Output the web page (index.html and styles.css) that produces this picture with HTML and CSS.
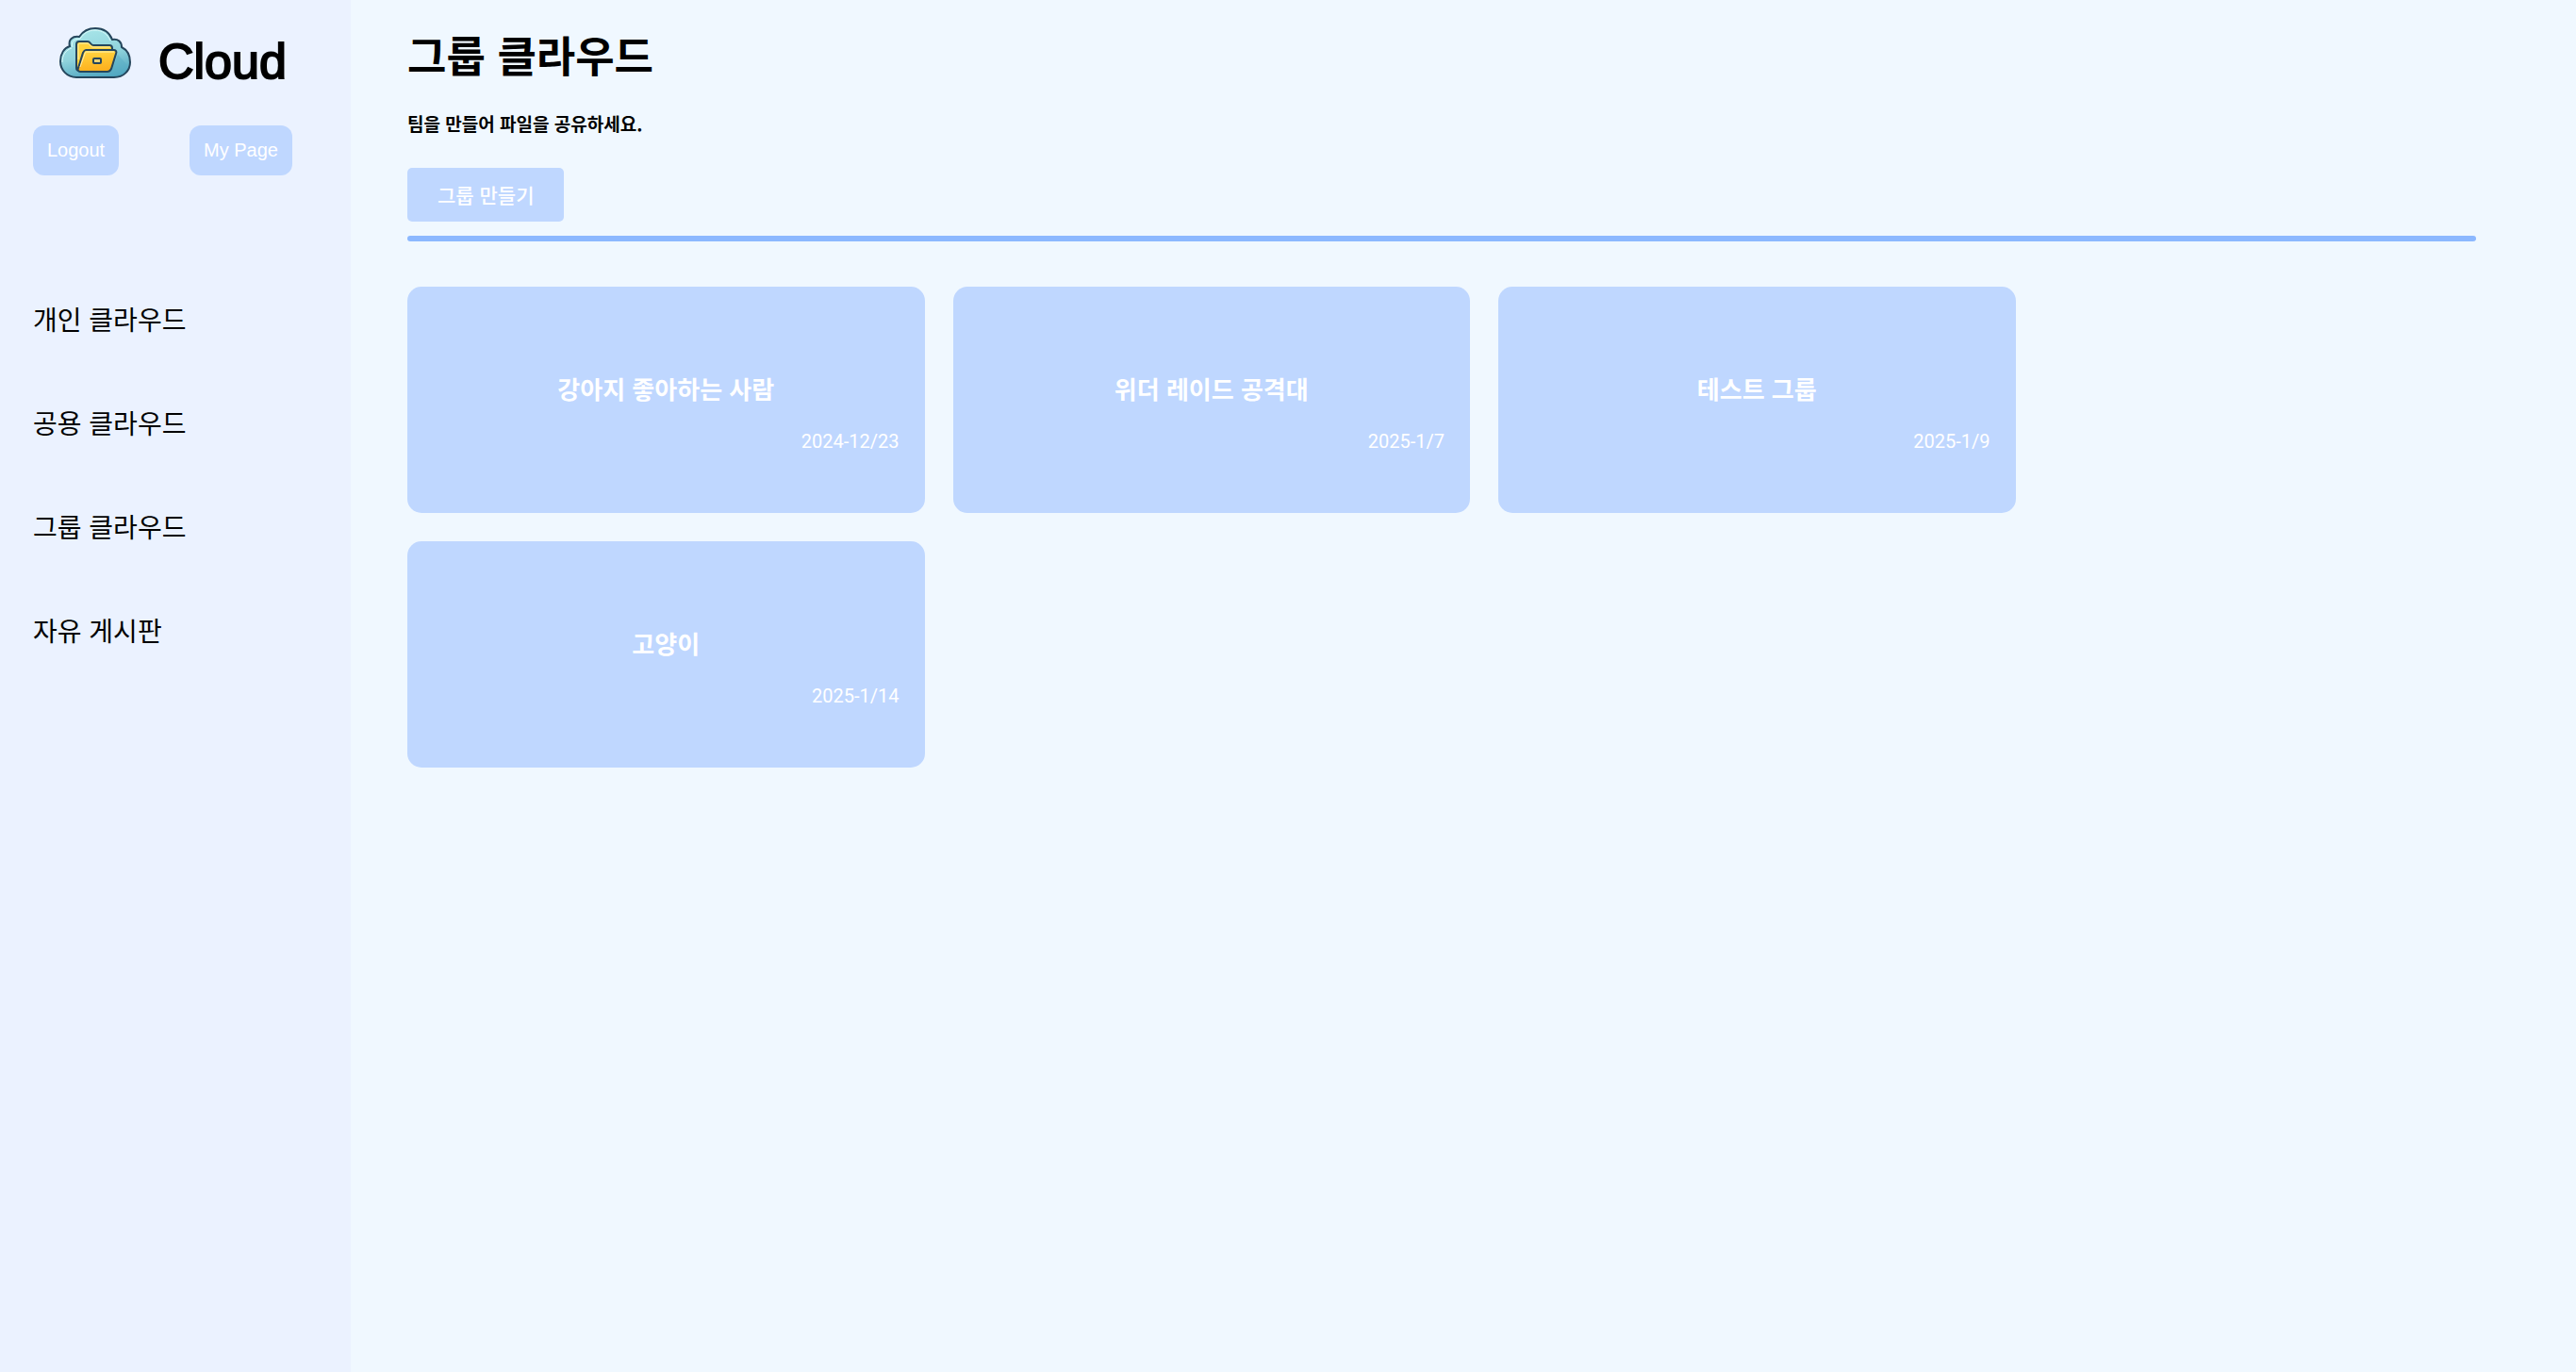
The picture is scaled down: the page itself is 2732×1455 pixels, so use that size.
FILE: index.html
```html
<!DOCTYPE html>
<html lang="ko">
<head>
<meta charset="utf-8">
<meta name="viewport" content="width=device-width, initial-scale=1">
<title>그룹 클라우드</title>
<link rel="stylesheet" href="styles.css">
</head>
<body>
<div class="layout">
  <aside class="sidebar">
    <a class="brand" href="#">
      <svg class="brand-logo" viewBox="0 0 76 54" aria-hidden="true">
        <defs>
          <linearGradient id="sky" x1="0.3" y1="0" x2="0.6" y2="1">
            <stop offset="0" stop-color="#a9e6e9"/>
            <stop offset="0.55" stop-color="#90d3dc"/>
            <stop offset="1" stop-color="#4fa5bf"/>
          </linearGradient>
          <linearGradient id="gold" x1="0" y1="0" x2="0.2" y2="1">
            <stop offset="0" stop-color="#ffd945"/>
            <stop offset="1" stop-color="#fdb01e"/>
          </linearGradient>
        </defs>
        <path d="M18 53C8 53 1 45 1 36C1 28 5 22 11 20C9 13 14 9 21 10C25 4 31 1 38 1C46 1 53 5 56 13C62 12 66 15 66 21C72 24 75 30 75 37C75 46 68 53 58 53Z" fill="url(#sky)" stroke="#25465c" stroke-width="2"/>
        <path d="M14 21C12 15 16 12 22 12C26 6 31 3 38 3C45 3 51 7 54 14M3 37C3 29 7 24 13 22" fill="none" stroke="#dcfafa" stroke-width="1"/>
        <path d="M62 29L72 40C71 47 65 51 58 51H22L20 47H55Z" fill="#5aaec6" opacity="0.5"/>
        <path d="M18 43V18C18 16 19 15 21 15H30C33 15 33 19 36 19H53C55 19 56 20 56 22V30L48 46H21C19 46 18 45 18 43Z" fill="#ffd23c" stroke="#25465c" stroke-width="2"/>
        <path d="M20 34V19C20 17 21 17 22 17H30C32 17 33 21 35 21H54" fill="none" stroke="#fff0b0" stroke-width="1"/>
        <path d="M28 24H58C60 24 61 26 60 28L55 44C54 46 53 47 51 47H22C20 47 19 45 20 43L25 27C26 25 27 24 28 24Z" fill="url(#gold)" stroke="#25465c" stroke-width="2"/>
        <path d="M22 42L27 28C27 26 28 26 30 26H58" fill="none" stroke="#fff0b0" stroke-width="1"/>
        <rect x="36" y="33" width="8" height="5" rx="1" fill="#e8d27a" stroke="#25465c" stroke-width="2"/>
      </svg>
      <span class="brand-name">Cloud</span>
    </a>
    <div class="account">
      <button class="account-button" type="button">Logout</button>
      <button class="account-button" type="button">My Page</button>
    </div>
    <nav class="menu">
      <a href="#">개인 클라우드</a>
      <a href="#">공용 클라우드</a>
      <a href="#">그룹 클라우드</a>
      <a href="#">자유 게시판</a>
    </nav>
  </aside>
  <main class="content">
    <h1 class="title">그룹 클라우드</h1>
    <p class="subtitle">팀을 만들어 파일을 공유하세요.</p>
    <button class="create-button" type="button">그룹 만들기</button>
    <hr class="divider">
    <div class="groups">
      <a class="card" href="#"><h2 class="card-title">강아지 좋아하는 사람</h2><p class="card-date">2024-12/23</p></a>
      <a class="card" href="#"><h2 class="card-title">위더 레이드 공격대</h2><p class="card-date">2025-1/7</p></a>
      <a class="card" href="#"><h2 class="card-title">테스트 그룹</h2><p class="card-date">2025-1/9</p></a>
      <a class="card" href="#"><h2 class="card-title">고양이</h2><p class="card-date">2025-1/14</p></a>
    </div>
  </main>
</div>
</body>
</html>
```
FILE: styles.css
```css
* {
  box-sizing: border-box;
}

body {
  margin: 0;
  background: #f0f8ff;
  color: #000;
  font-family: "Noto Sans CJK KR", sans-serif;
}

a {
  color: inherit;
  text-decoration: none;
}

button {
  border: 0;
  background: #bfd7ff;
  color: #fff;
  cursor: pointer;
}

.layout {
  display: flex;
  min-height: 100vh;
}

.sidebar {
  flex: 0 0 372px;
  padding: 28px 35px;
  background: #ebf2ff;
}

.brand {
  display: flex;
  align-items: flex-start;
  gap: 29px;
  padding-left: 28px;
}

.brand-logo {
  width: 76px;
  height: 56px;
}

.brand-name {
  padding-top: 7px;
  font-family: "Liberation Sans", sans-serif;
  font-size: 52px;
  line-height: 60px;
  -webkit-text-stroke: 2px #000;
}

.account {
  display: flex;
  justify-content: space-between;
  margin-top: 38px;
  padding-right: 27px;
}

.account-button {
  padding: 15px;
  border-radius: 12px;
  font-family: "Liberation Sans", sans-serif;
  font-size: 20px;
  line-height: 23px;
}

.menu {
  display: flex;
  flex-direction: column;
  gap: 70px;
  margin-top: 132px;
  font-size: 28px;
  line-height: 40px;
}

.content {
  flex: 1;
  padding: 28px 106px 30px 60px;
}

.title {
  margin: 0;
  font-size: 45px;
  font-weight: 700;
  line-height: 60px;
}

.subtitle {
  margin: 29px 0 33px;
  font-size: 19px;
  font-weight: 700;
  line-height: 28px;
}

.create-button {
  display: block;
  padding: 14px 32px;
  border-radius: 5px;
  font-family: inherit;
  font-size: 21px;
  font-weight: 500;
  line-height: 29px;
}

.divider {
  height: 6px;
  margin: 15px 0 48px;
  border: 0;
  border-radius: 3px;
  background: #8cb8ff;
}

.groups {
  display: flex;
  flex-wrap: wrap;
  gap: 30px;
}

.card {
  width: 25%;
  min-height: 240px;
  padding: 90px 27px 30px;
  border-radius: 15px;
  background: #bfd7ff;
  color: #fff;
}

.card-title {
  margin: 0 0 26px;
  font-size: 26px;
  font-weight: 700;
  line-height: 36px;
  text-align: center;
}

.card-date {
  margin: 0;
  font-family: Roboto, sans-serif;
  font-size: 20px;
  font-weight: 400;
  line-height: 24px;
  text-align: right;
}
```
